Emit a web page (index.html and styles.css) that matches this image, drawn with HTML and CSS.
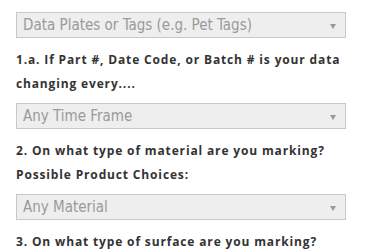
FILE: index.html
```html
<!DOCTYPE html>
<html>
<head>
<meta charset="utf-8">
<link rel="stylesheet" href="styles.css">
</head>
<body>
<form class="finder">
  <label class="q">1. What type of identification are you marking?</label>
  <div class="select"><span class="val">Data Plates or Tags (e.g. Pet Tags)</span><span class="arrow"></span></div>
  <label class="q">1.a. If Part #, Date Code, or Batch # is your data changing every....</label>
  <div class="select"><span class="val">Any Time Frame</span><span class="arrow"></span></div>
  <label class="q q-tight">2. On what type of material are you marking?</label>
  <label class="q">Possible Product Choices:</label>
  <div class="select"><span class="val">Any Material</span><span class="arrow"></span></div>
  <label class="q">3. On what type of surface are you marking?</label>
</form>
</body>
</html>
```
FILE: styles.css
```css
html, body {
  margin: 0;
  padding: 0;
  background: #fff;
}
.finder {
  display: flex;
  flex-direction: column;
  align-items: flex-start;
  margin-top: -19px;
  padding: 0 29px 0 16px;
}
.q {
  display: block;
  font-family: "Open Sans", sans-serif;
  font-weight: 700;
  font-size: 12px;
  line-height: 24px;
  letter-spacing: 0.85px;
  color: #333;
  margin-bottom: 7px;
  width: 332px;
}
.q-tight {
  margin-bottom: 0;
}
.select {
  box-sizing: border-box;
  width: 330px;
  height: 26px;
  border: 1px solid #c8c8c8;
  background: #eee;
  display: flex;
  align-items: center;
  justify-content: space-between;
  padding: 0 9px 0 6px;
  margin-bottom: 10px;
}
.val {
  font-family: "DejaVu Sans", sans-serif;
  font-stretch: condensed;
  font-size: 15px;
  color: #9a9a9a;
}
.arrow {
  width: 0;
  height: 0;
  border-left: 3px solid transparent;
  border-right: 3px solid transparent;
  border-top: 5px solid #999;
  margin-top: 2px;
}
```
